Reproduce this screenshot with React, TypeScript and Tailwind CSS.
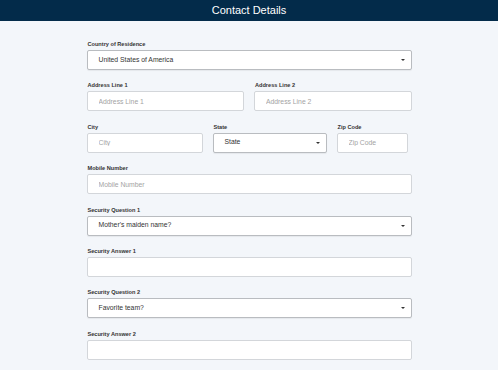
import React from 'react';

const font = { fontFamily: '"Liberation Sans", Arial, sans-serif' };

const Label = ({ children }: { children: React.ReactNode }) => (
    <div className="h-[8px] text-[5.6px] leading-[8px] mb-[2px] font-semibold text-[#333] pl-[1px] whitespace-nowrap">{children}</div>
);

const TextInput = ({ placeholder }: { placeholder?: string }) => (
    <input
        type="text"
        placeholder={placeholder}
        className="block w-full h-[20px] bg-white border border-[#d3d6da] rounded-[2px] pl-[11px] text-[6.8px] text-[#333] placeholder:text-[#a3a3a3] outline-none"
    />
);

const Select = ({ value }: { value: string }) => (
    <div className="w-full h-[20px] bg-white border border-[#b9bcc0] rounded-[2px] pl-[11px] pr-[6px] flex items-center justify-between text-[6.8px] leading-none text-[#333] shadow-[0_1px_1px_rgba(0,0,0,0.06)]">
        <span>{value}</span>
        <span className="w-0 h-0 border-l-[2px] border-r-[2px] border-t-[2px] border-l-transparent border-r-transparent border-t-[#333]" />
    </div>
);

const App = () => {
    return (
        <div className="w-[498px] h-[370px] bg-[#f3f6fa] overflow-hidden" style={font}>
            <div className="h-[21px] bg-[#032b4a] flex items-center justify-center">
                <h1 className="text-white text-[11px] leading-none">Contact Details</h1>
            </div>

            <div className="w-[325px] mx-auto pt-[19px] flex flex-col gap-[11.4px]">
                <div>
                    <Label>Country of Residence</Label>
                    <Select value="United States of America" />
                </div>

                <div className="grid grid-cols-2 gap-[10px]">
                    <div>
                        <Label>Address Line 1</Label>
                        <TextInput placeholder="Address Line 1" />
                    </div>
                    <div>
                        <Label>Address Line 2</Label>
                        <TextInput placeholder="Address Line 2" />
                    </div>
                </div>

                <div className="grid grid-cols-[116px_114px_71px] gap-[10px]">
                    <div>
                        <Label>City</Label>
                        <TextInput placeholder="City" />
                    </div>
                    <div>
                        <Label>State</Label>
                        <Select value="State" />
                    </div>
                    <div>
                        <Label>Zip Code</Label>
                        <TextInput placeholder="Zip Code" />
                    </div>
                </div>

                <div>
                    <Label>Mobile Number</Label>
                    <TextInput placeholder="Mobile Number" />
                </div>

                <div>
                    <Label>Security Question 1</Label>
                    <Select value="Mother's maiden name?" />
                </div>

                <div>
                    <Label>Security Answer 1</Label>
                    <TextInput />
                </div>

                <div>
                    <Label>Security Question 2</Label>
                    <Select value="Favorite team?" />
                </div>

                <div>
                    <Label>Security Answer 2</Label>
                    <TextInput />
                </div>
            </div>
        </div>
    );
};

export default App;
